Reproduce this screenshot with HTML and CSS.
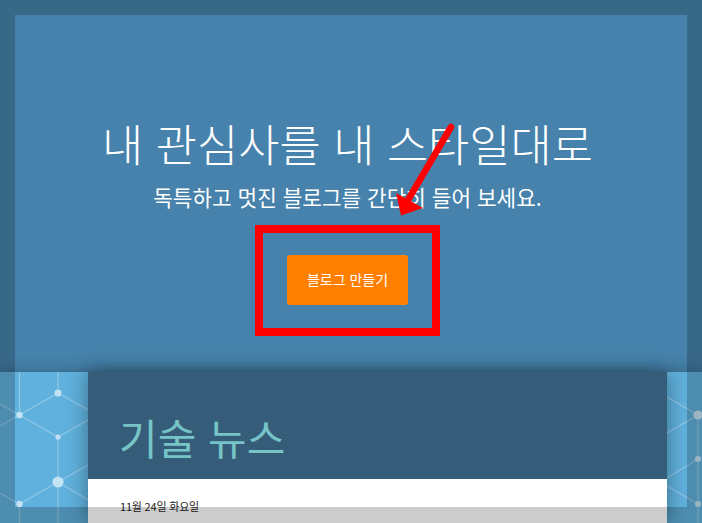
FILE: index.html
```html
<!DOCTYPE html>
<html lang="ko">
<head>
<meta charset="utf-8">
<title>블로그 만들기</title>
<link rel="stylesheet" href="styles.css">
</head>
<body>
<section class="hero">
  <h1 class="hero-title">내 관심사를 내 스타일대로</h1>
  <p class="hero-sub">독특하고 멋진 블로그를 간단히 들어 보세요.</p>
  <a class="hero-btn">블로그 만들기</a>
</section>
<section class="blog">
  <div class="strip strip-left">
    <svg class="net" width="88" height="151" viewBox="0 372 88 151">
      <g class="net-lines">
        <path d="M19.5 372V415M58 372V393M58 393L88 410M58 393L19.5 415M19.5 415L58 437M58 437L88 420M58 437V482M58 482L88 465M58 482L88 500M58 482L19.5 504M58 482V523M19.5 504V523M19.5 415L0 404M19.5 415L0 426M19.5 504L0 493"/>
      </g>
      <g class="net-nodes">
        <circle cx="19.5" cy="415" r="3.2"/>
        <circle cx="58" cy="393" r="3.5"/>
        <circle cx="58" cy="437" r="2.6"/>
        <circle cx="58" cy="482" r="5.6"/>
        <circle cx="19.5" cy="504" r="3.2"/>
      </g>
    </svg>
  </div>
  <div class="blog-main">
    <header class="blog-head"><h2 class="blog-title">기술 뉴스</h2></header>
    <div class="blog-body"><p class="blog-date">11월 24일 화요일</p></div>
  </div>
  <div class="strip strip-right">
    <svg class="net" width="35" height="151" viewBox="667 372 35 151">
      <g class="net-lines">
        <path d="M667 397L698 415M667 433L698 415M698 415V523M667 478L698 459M667 486L698 504"/>
      </g>
      <g class="net-nodes">
        <circle cx="698" cy="415" r="4.6"/>
        <circle cx="698" cy="459" r="3"/>
        <circle cx="698" cy="504" r="3"/>
      </g>
    </svg>
  </div>
</section>
<div class="spotlight"></div>
<div class="callout"></div>
<svg class="arrow" width="702" height="523" viewBox="0 0 702 523">
  <path class="arrow-shaft" d="M451 127L408 200"/>
  <path class="arrow-head" d="M401 215.500L396 193L423 208Z"/>
</svg>
</body>
</html>
```
FILE: styles.css
```css
* { box-sizing: border-box; }
html, body { margin: 0; height: 523px; overflow: hidden; }
body {
  position: relative;
  font-family: "Noto Sans CJK KR", "Noto Sans", sans-serif;
  background: #fff;
}
.hero {
  height: 372px;
  background: #4682ab;
  color: #fff;
  display: flex;
  flex-direction: column;
  align-items: center;
  padding: 113px 7px 0 0;
}
.hero-title {
  margin: 0;
  font-size: 44.8px;
  font-weight: 300;
  line-height: 60px;
}
.hero-sub {
  margin: 9px 0 0;
  font-size: 21.3px;
  font-weight: 400;
  line-height: 30px;
}
.hero-btn {
  margin-top: 43px;
  width: 121px;
  height: 50px;
  padding-bottom: 3px;
  display: flex;
  align-items: center;
  justify-content: center;
  background: #ff8000;
  border-radius: 3px;
  color: #fff;
  font-size: 14px;
  font-weight: 400;
}
.blog {
  height: 151px;
  display: flex;
  box-shadow: 0 0 14px rgba(0, 0, 0, .25);
}
.strip { background: #60b1dd; overflow: hidden; }
.strip-left { width: 88px; }
.strip-right { width: 35px; }
.net { display: block; }
.net-lines path { fill: none; stroke: rgba(255, 255, 255, .3); stroke-width: 1.2; }
.net-nodes circle { fill: #c2e3f4; }
.blog-main {
  width: 579px;
  position: relative;
  box-shadow: 0 0 20px rgba(0, 0, 0, .4);
}
.blog-head {
  height: 107px;
  background: #355d7a;
  padding: 35px 0 0 31px;
}
.blog-title {
  margin: 0;
  font-size: 42px;
  font-weight: 400;
  line-height: 60px;
  color: #76c4c6;
}
.blog-body {
  height: 44px;
  background: #fff;
  padding: 19px 0 0 32px;
}
.blog-date {
  margin: 0;
  font-size: 11px;
  line-height: 16px;
  color: #222;
  letter-spacing: -.2px;
}
.spotlight {
  position: absolute;
  left: 15px;
  top: 15px;
  width: 672px;
  height: 492px;
  box-shadow: 0 0 0 800px rgba(0, 0, 0, .2);
}
.callout {
  position: absolute;
  left: 255px;
  top: 225px;
  width: 185px;
  height: 111px;
  border: 8px solid #f00;
}
.arrow { position: absolute; left: 0; top: 0; }
.arrow-shaft { stroke: #f00; stroke-width: 6.500; stroke-linecap: round; fill: none; }
.arrow-head { fill: #f00; }
```
